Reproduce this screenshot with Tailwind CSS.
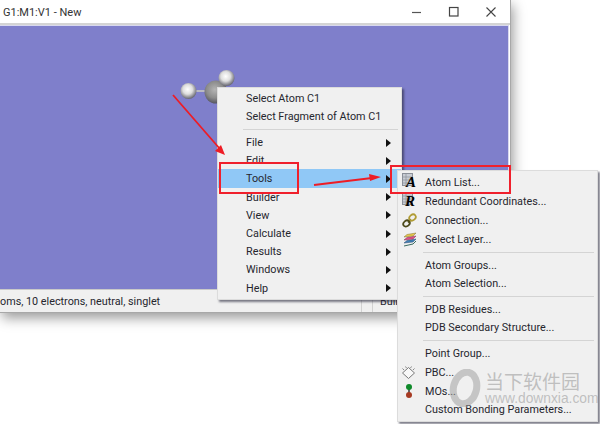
<!DOCTYPE html>
<html lang="en">
<head>
  <meta charset="UTF-8">
  <title>G1:M1:V1 - New</title>
  <script src="https://cdn.jsdelivr.net/npm/@tailwindcss/browser@4"></script>
</head>
<body class="bg-white w-[600px] h-[424px] overflow-hidden relative font-['Roboto',sans-serif] text-[10.800px] leading-[13px] text-[#26262e]">

  <!-- main window -->
  <div class="w-[511px] h-[313px] flex flex-col bg-white border-r border-b border-[#a8a8a8] shadow-[2px_5px_12px_rgba(0,0,0,0.4)]">
    <div class="h-[25px] flex items-center justify-between border-b-2 border-[#d4d4d4] shrink-0">
      <span class="pl-[3px] pt-[1px] text-[11px] text-[#333]">G1:M1:V1 - New</span>
      <div class="flex items-center pr-[13px] gap-[25px]">
        <svg width="12" height="12" viewBox="0 0 12 12"><path d="M1 6.500h9" stroke="#555" stroke-width="1.200"/></svg>
        <svg width="12" height="12" viewBox="0 0 12 12"><rect x="1.500" y="1.500" width="8.500" height="8.500" fill="none" stroke="#444" stroke-width="1.200"/></svg>
        <svg width="12" height="12" viewBox="0 0 12 12"><path d="M1.500 1.500l9 9M10.500 1.500l-9 9" stroke="#444" stroke-width="1.100"/></svg>
      </div>
    </div>
    <div class="flex-1 bg-[#7f7fcb] mr-[1px] border-t border-r border-[#d8d8ee]"></div>
    <div class="h-[23px] shrink-0 bg-[#f0f0f0] border-t border-[#c9c9c9] flex items-center relative">
      <span class="whitespace-nowrap">oms, 10 electrons, neutral, singlet</span>
      <span class="absolute left-[361px] top-0 h-full w-[12px] border-x border-[#d2d2d2]"></span>
      <span class="absolute left-[380px]">Builder</span>
    </div>
  </div>

  <!-- molecule on the canvas -->
  <svg class="absolute left-[170px] top-[60px]" width="70" height="50" viewBox="0 0 70 50">
    <defs>
      <radialGradient id="h" cx="0.45" cy="0.4" r="0.6">
        <stop offset="0" stop-color="#ffffff"/><stop offset="0.5" stop-color="#dedede"/><stop offset="1" stop-color="#66666f"/>
      </radialGradient>
      <radialGradient id="c" cx="0.45" cy="0.4" r="0.6">
        <stop offset="0" stop-color="#b4b4b4"/><stop offset="0.6" stop-color="#8c8c8c"/><stop offset="1" stop-color="#55555f"/>
      </radialGradient>
    </defs>
    <path d="M26 31h20" stroke="#b9b9c4" stroke-width="2"/>
    <circle cx="46" cy="32" r="11.500" fill="url(#c)"/>
    <circle cx="18.500" cy="31" r="8" fill="url(#h)"/>
    <circle cx="56.500" cy="18" r="8" fill="url(#h)"/>
  </svg>

  <!-- context menu -->
  <div class="absolute left-[217px] top-[87px] w-[185px] h-[213px] bg-[#f0f0f0] border border-[#dcdcdc] pt-[1px] shadow-[2px_2px_2px_rgba(40,40,60,0.6)] [&>div]:pt-[1px]">
    <div class="h-[18px] pl-[28px] flex items-center">Select Atom C1</div>
    <div class="h-[18px] pl-[28px] flex items-center">Select Fragment of Atom C1</div>
    <div class="h-[8px] flex items-center pl-[25px] pr-[3px]"><div class="h-px w-full bg-[#d4d4d4]"></div></div>
    <div class="h-[18.200px] pl-[28px] pr-[10px] flex items-center justify-between">File<svg width="5" height="8" viewBox="0 0 5 8"><path d="M0 0l5 4-5 4z" fill="#111"/></svg></div>
    <div class="h-[18.200px] pl-[28px] pr-[10px] flex items-center justify-between">Edit<svg width="5" height="8" viewBox="0 0 5 8"><path d="M0 0l5 4-5 4z" fill="#111"/></svg></div>
    <div class="h-[18.200px] pl-[28px] pr-[10px] flex items-center justify-between bg-[#90c8f6]">Tools<svg width="5" height="8" viewBox="0 0 5 8"><path d="M0 0l5 4-5 4z" fill="#111"/></svg></div>
    <div class="h-[18.200px] pl-[28px] pr-[10px] flex items-center justify-between">Builder<svg width="5" height="8" viewBox="0 0 5 8"><path d="M0 0l5 4-5 4z" fill="#111"/></svg></div>
    <div class="h-[18.200px] pl-[28px] pr-[10px] flex items-center justify-between">View<svg width="5" height="8" viewBox="0 0 5 8"><path d="M0 0l5 4-5 4z" fill="#111"/></svg></div>
    <div class="h-[18.200px] pl-[28px] pr-[10px] flex items-center justify-between">Calculate<svg width="5" height="8" viewBox="0 0 5 8"><path d="M0 0l5 4-5 4z" fill="#111"/></svg></div>
    <div class="h-[18.200px] pl-[28px] pr-[10px] flex items-center justify-between">Results<svg width="5" height="8" viewBox="0 0 5 8"><path d="M0 0l5 4-5 4z" fill="#111"/></svg></div>
    <div class="h-[18.200px] pl-[28px] pr-[10px] flex items-center justify-between">Windows<svg width="5" height="8" viewBox="0 0 5 8"><path d="M0 0l5 4-5 4z" fill="#111"/></svg></div>
    <div class="h-[18.200px] pl-[28px] pr-[10px] flex items-center justify-between">Help<svg width="5" height="8" viewBox="0 0 5 8"><path d="M0 0l5 4-5 4z" fill="#111"/></svg></div>
  </div>

  <!-- Tools submenu -->
  <div class="absolute left-[397px] top-[170px] w-[201px] h-[252px] bg-[#f0f0f0] border border-[#dcdcdc] pt-[1px] shadow-[2px_2px_2px_rgba(40,40,60,0.6)] [&>div]:pt-[1px]">
    <div class="h-[19px] flex items-center">
      <span class="w-[27px] h-[18px] relative shrink-0">
        <svg class="absolute left-[4px] top-[0px]" width="12" height="14" viewBox="0 0 12 14"><rect x="0.500" y="0.500" width="10" height="12" fill="#c8ccd4" stroke="#8a8f98"/><path d="M1 4h9M1 7h9M1 10h9M4 1v11" stroke="#8a8f98" stroke-width="0.700"/></svg>
        <span class="absolute left-[8px] top-[0px] font-['Liberation_Serif',serif] font-bold italic text-[15px] leading-[18px] text-black">A</span>
      </span>Atom List...
    </div>
    <div class="h-[19px] flex items-center">
      <span class="w-[27px] h-[18px] relative shrink-0">
        <svg class="absolute left-[4px] top-[0px]" width="12" height="14" viewBox="0 0 12 14"><rect x="0.500" y="0.500" width="10" height="12" fill="#c8ccd4" stroke="#8a8f98"/><path d="M1 4h9M1 7h9M1 10h9M4 1v11" stroke="#8a8f98" stroke-width="0.700"/></svg>
        <span class="absolute left-[7px] top-[0px] font-['Liberation_Serif',serif] font-bold italic text-[15px] leading-[18px] text-black">R</span>
      </span>Redundant Coordinates...
    </div>
    <div class="h-[19px] flex items-center">
      <span class="w-[27px] h-[18px] flex items-center pl-[4px] shrink-0">
        <svg width="15" height="15" viewBox="0 0 15 15" fill="none"><path d="M6 9.500l3-3" stroke="#5c5a20" stroke-width="2"/><ellipse cx="4.500" cy="10.500" rx="3.500" ry="2.700" transform="rotate(-40 4.500 10.500)" stroke="#4c4a1a" stroke-width="1.800"/><ellipse cx="10.500" cy="4.500" rx="3.500" ry="2.700" transform="rotate(-40 10.500 4.500)" stroke="#b09c34" stroke-width="1.800"/></svg>
      </span>Connection...
    </div>
    <div class="h-[19px] flex items-center">
      <span class="w-[27px] h-[18px] flex items-center pl-[5px] shrink-0">
        <svg width="14" height="15" viewBox="0 0 14 15"><path d="M1 11l3-2.500 9-1.500-3 3z" fill="#3f7fb5" stroke="#2a4a70" stroke-width="0.500"/><path d="M1 8l3-2.500 9-1.500-3 3z" fill="#e04f86" stroke="#803050" stroke-width="0.500"/><path d="M1 5l3-2.500 9-1.500-3 3z" fill="#e8c84a" stroke="#807030" stroke-width="0.500"/><path d="M1 14l9-2 3-3" fill="none" stroke="#3a6a60" stroke-width="1"/></svg>
      </span>Select Layer...
    </div>
    <div class="h-[7.500px] flex items-center pl-[25px] pr-[3px]"><div class="h-px w-full bg-[#d4d4d4]"></div></div>
    <div class="h-[18.200px] pl-[27px] flex items-center">Atom Groups...</div>
    <div class="h-[18.200px] pl-[27px] flex items-center">Atom Selection...</div>
    <div class="h-[7.800px] flex items-center pl-[25px] pr-[3px]"><div class="h-px w-full bg-[#d4d4d4]"></div></div>
    <div class="h-[18.200px] pl-[27px] flex items-center">PDB Residues...</div>
    <div class="h-[18.200px] pl-[27px] flex items-center">PDB Secondary Structure...</div>
    <div class="h-[7.800px] flex items-center pl-[25px] pr-[3px]"><div class="h-px w-full bg-[#d4d4d4]"></div></div>
    <div class="h-[18.500px] pl-[27px] flex items-center">Point Group...</div>
    <div class="h-[19px] flex items-center">
      <span class="w-[27px] h-[18px] flex items-center pl-[3px] shrink-0">
        <svg width="15" height="15" viewBox="0 0 15 15"><path d="M7.500 2.500l6 5.500-6 5.500L1.500 8z" fill="#f8f8f8" stroke="#777" stroke-width="1"/><path d="M1.500 3.500l1.500 1.500M4.500 1.500l1 1.500M10.500 1.500l-1 1.500M13.500 3.500L12 5" stroke="#888" stroke-width="1"/></svg>
      </span>PBC...
    </div>
    <div class="h-[19px] flex items-center">
      <span class="w-[27px] h-[18px] flex items-center pl-[7px] shrink-0">
        <svg width="8" height="16" viewBox="0 0 8 16"><path d="M4 5v6" stroke="#333" stroke-width="1.500"/><circle cx="4" cy="4" r="3" fill="#0f8a2a"/><circle cx="4" cy="12" r="3" fill="#a63a22"/></svg>
      </span>MOs...
    </div>
    <div class="h-[18.200px] pl-[27px] flex items-center">Custom Bonding Parameters...</div>
  </div>

  <!-- watermark -->
  <div class="absolute left-[447px] top-[369px] flex items-start pointer-events-none">
    <svg width="36" height="38" viewBox="0 0 36 38"><ellipse cx="18" cy="19" rx="11.500" ry="16" transform="rotate(14 18 19)" fill="none" stroke="#9a9a9a" stroke-opacity="0.500" stroke-width="7"/></svg>
    <div class="ml-[2px] mt-[1px] flex flex-col">
      <span class="font-['Noto_Sans_CJK_SC',sans-serif] text-[19px] leading-[22px] text-[#a9a9a9]/70 whitespace-nowrap">当下软件园</span>
      <span class="mt-[1px] font-['Liberation_Sans',sans-serif] text-[13.800px] leading-[11px] text-[#a9a9a9]/70 whitespace-nowrap">www.downxia.com</span>
    </div>
  </div>

  <!-- red annotations -->
  <div class="absolute left-[219px] top-[162px] w-[80px] h-[32px] border-2 border-[#f0202c]"></div>
  <div class="absolute left-[390px] top-[165px] w-[121px] h-[29px] border-2 border-[#f0202c]"></div>
  <svg class="absolute left-0 top-0 pointer-events-none" width="600" height="424" viewBox="0 0 600 424">
    <path d="M173 95L220 149" stroke="#ee1c25" stroke-width="1.800"/>
    <path d="M225 155l-10-4 6-6z" fill="#ee1c25"/>
    <path d="M314 185l58-7" stroke="#ee1c25" stroke-width="1.800"/>
    <path d="M381 177l-11 4-1-7z" fill="#ee1c25"/>
  </svg>
</body>
</html>
